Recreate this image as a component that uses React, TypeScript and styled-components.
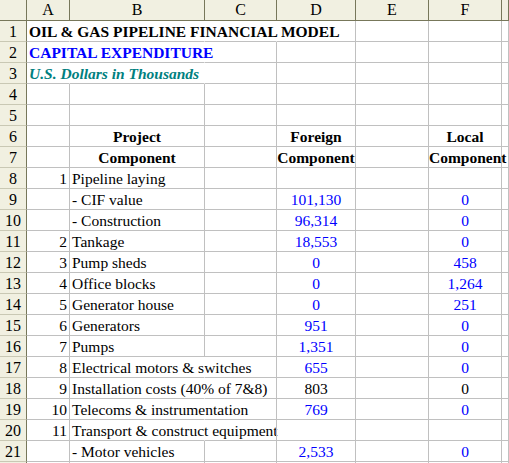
import React from "react";
import styled, { createGlobalStyle, css } from "styled-components";

const Global = createGlobalStyle`
  html, body { margin: 0; padding: 0; background: #ffffff; }
  body { font-family: "Liberation Serif", "Times New Roman", serif; }
`;

const GRID = "#c0c0c0";
const HEAD_LINE = "#77775a";

const Sheet = styled.div`
  display: grid;
  grid-template-columns: 27px 43px 135px 72px 79px 73px 73px 1fr;
  grid-auto-rows: 21px;
  width: 509px;
  height: 463px;
  overflow: hidden;
  background: #ffffff;
  font-size: 15.5px;
  line-height: 20px;
  color: #000000;
`;

const Corner = styled.div`
  box-sizing: border-box;
  background: #f1f0e1;
  border-right: 1px solid ${HEAD_LINE};
  border-bottom: 1px solid ${HEAD_LINE};
`;

const ColHead = styled.div`
  box-sizing: border-box;
  background: #f1f0e1;
  border-right: 1px solid ${HEAD_LINE};
  border-bottom: 1px solid ${HEAD_LINE};
  text-align: center;
  line-height: 20px;
  font-size: 16px;
`;

const RowHead = styled.div`
  box-sizing: border-box;
  background: #f1f0e1;
  border-right: 1px solid ${HEAD_LINE};
  border-bottom: 1px solid #c9c8b4;
  text-align: center;
  line-height: 21px;
  font-size: 16px;
`;

type CellProps = {
  $align?: "left" | "center" | "right";
  $color?: string;
  $bold?: boolean;
  $italic?: boolean;
  $open?: boolean;
};

const Cell = styled.div<CellProps>`
  box-sizing: border-box;
  position: relative;
  padding: 0 2px;
  line-height: 21px;
  white-space: nowrap;
  overflow: visible;
  text-align: ${(p) => p.$align ?? "left"};
  color: ${(p) => p.$color ?? "#000000"};
  font-weight: ${(p) => (p.$bold ? 700 : 400)};
  font-style: ${(p) => (p.$italic ? "italic" : "normal")};
  border-bottom: 1px solid ${GRID};
  border-right: 1px solid ${(p) => (p.$open ? "transparent" : GRID)};
  ${(p) =>
    p.$align === "center" &&
    css`
      padding: 0;
    `}
`;

const BLUE = "#0000ff";
const TEAL = "#008080";

type CellSpec = {
  text?: string;
  align?: "left" | "center" | "right";
  color?: string;
  bold?: boolean;
  italic?: boolean;
  open?: boolean;
};

type RowSpec = CellSpec[];

const e: CellSpec = {};

const num = (text: string, color = BLUE): CellSpec => ({ text, align: "center", color });
const idx = (text: string): CellSpec => ({ text, align: "right" });

const rows: RowSpec[] = [
  [
    { text: "OIL & GAS PIPELINE FINANCIAL MODEL", bold: true, open: true },
    { open: true },
    { open: true },
    e, e, e, e,
  ],
  [
    { text: "CAPITAL EXPENDITURE", bold: true, color: BLUE, open: true },
    { open: true },
    e, e, e, e, e,
  ],
  [
    { text: "U.S. Dollars in Thousands", bold: true, italic: true, color: TEAL, open: true },
    { open: true },
    e, e, e, e, e,
  ],
  [e, e, e, e, e, e, e],
  [e, e, e, e, e, e, e],
  [
    e,
    { text: "Project", bold: true, align: "center" },
    e,
    { text: "Foreign", bold: true, align: "center" },
    e,
    { text: "Local", bold: true, align: "center" },
    e,
  ],
  [
    e,
    { text: "Component", bold: true, align: "center" },
    e,
    { text: "Component", bold: true, align: "center" },
    e,
    { text: "Component", bold: true, align: "center" },
    e,
  ],
  [idx("1"), { text: "Pipeline laying" }, e, e, e, e, e],
  [e, { text: "- CIF value" }, e, num("101,130"), e, num("0"), e],
  [e, { text: "- Construction" }, e, num("96,314"), e, num("0"), e],
  [idx("2"), { text: "Tankage" }, e, num("18,553"), e, num("0"), e],
  [idx("3"), { text: "Pump sheds" }, e, num("0"), e, num("458"), e],
  [idx("4"), { text: "Office blocks" }, e, num("0"), e, num("1,264"), e],
  [idx("5"), { text: "Generator house" }, e, num("0"), e, num("251"), e],
  [idx("6"), { text: "Generators" }, e, num("951"), e, num("0"), e],
  [idx("7"), { text: "Pumps" }, e, num("1,351"), e, num("0"), e],
  [idx("8"), { text: "Electrical motors & switches", open: true }, e, num("655"), e, num("0"), e],
  [idx("9"), { text: "Installation costs (40% of 7&8)", open: true }, e, num("803", "#000000"), e, num("0", "#000000"), e],
  [idx("10"), { text: "Telecoms & instrumentation", open: true }, e, num("769"), e, num("0"), e],
  [idx("11"), { text: "Transport & construct equipment", open: true }, e, e, e, e, e],
  [e, { text: "- Motor vehicles" }, e, num("2,533"), e, num("0"), e],
];

const COLS = ["A", "B", "C", "D", "E", "F", ""];

export default function App() {
  return (
    <>
      <Global />
      <Sheet>
        <Corner />
        {COLS.map((c, i) => (
          <ColHead key={`h${i}`}>{c}</ColHead>
        ))}
        {rows.map((row, r) => (
          <React.Fragment key={`r${r}`}>
            <RowHead>{r + 1}</RowHead>
            {row.map((c, i) => (
              <Cell
                key={`c${r}-${i}`}
                $align={c.align}
                $color={c.color}
                $bold={c.bold}
                $italic={c.italic}
                $open={c.open}
              >
                {c.text}
              </Cell>
            ))}
          </React.Fragment>
        ))}
        <RowHead />
        {COLS.map((_, i) => (
          <Cell key={`last${i}`} />
        ))}
      </Sheet>
    </>
  );
}
